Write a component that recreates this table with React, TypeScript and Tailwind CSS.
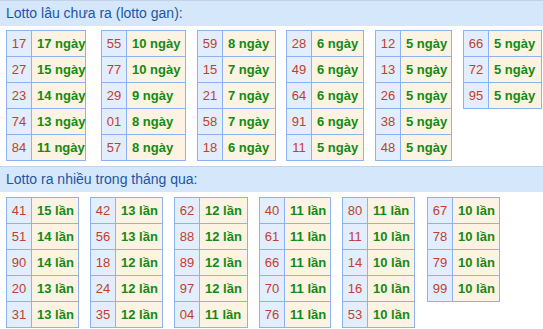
type Row = [string, string];

type Table = { rows: Row[]; className: string; valWidth: string };

const ganTables: Table[] = [
  {
    className: "ml-[6px] w-[80px]",
    valWidth: "w-[54px]",
    rows: [["17", "17"], ["27", "15"], ["23", "14"], ["74", "13"], ["84", "11"]],
  },
  {
    className: "ml-[15px] w-[85px]",
    valWidth: "w-[59px]",
    rows: [["55", "10"], ["77", "10"], ["29", "9"], ["01", "8"], ["57", "8"]],
  },
  {
    className: "ml-[11px] w-[79px]",
    valWidth: "w-[53px]",
    rows: [["59", "8"], ["15", "7"], ["21", "7"], ["58", "7"], ["18", "6"]],
  },
  {
    className: "ml-[10px] w-[78px]",
    valWidth: "w-[52px]",
    rows: [["28", "6"], ["49", "6"], ["64", "6"], ["91", "6"], ["11", "5"]],
  },
  {
    className: "ml-[11px] w-[77px]",
    valWidth: "w-[51px]",
    rows: [["12", "5"], ["13", "5"], ["26", "5"], ["38", "5"], ["48", "5"]],
  },
  {
    className: "ml-[11px] w-[79px]",
    valWidth: "w-[53px]",
    rows: [["66", "5"], ["72", "5"], ["95", "5"]],
  },
];

const hotTables: Table[] = [
  {
    className: "ml-[6px] w-[73px]",
    valWidth: "w-[47px]",
    rows: [["41", "15"], ["51", "14"], ["90", "14"], ["20", "13"], ["31", "13"]],
  },
  {
    className: "ml-[11px] w-[73px]",
    valWidth: "w-[47px]",
    rows: [["42", "13"], ["56", "13"], ["18", "12"], ["24", "12"], ["35", "12"]],
  },
  {
    className: "ml-[11px] w-[74px]",
    valWidth: "w-[48px]",
    rows: [["62", "12"], ["88", "12"], ["89", "12"], ["97", "12"], ["04", "11"]],
  },
  {
    className: "ml-[11px] w-[72px]",
    valWidth: "w-[46px]",
    rows: [["40", "11"], ["61", "11"], ["66", "11"], ["70", "11"], ["76", "11"]],
  },
  {
    className: "ml-[11px] w-[73px]",
    valWidth: "w-[47px]",
    rows: [["80", "11"], ["11", "10"], ["14", "10"], ["16", "10"], ["53", "10"]],
  },
  {
    className: "ml-[12px] w-[73px]",
    valWidth: "w-[47px]",
    rows: [["67", "10"], ["78", "10"], ["79", "10"], ["99", "10"]],
  },
];

function Heading({ children }: { children: string }) {
  return (
    <div className="flex h-[26px] items-center border-t border-[#c3d3e6] bg-[#d5e8fb] pl-[6px] text-[14px] text-[#1d55a5]">
      {children}
    </div>
  );
}

function LottoTable({ table, unit }: { table: Table; unit: string }) {
  return (
    <div className={`flex shrink-0 flex-col self-start border-l border-t border-[#8db2f2] ${table.className}`}>
      {table.rows.map(([num, count]) => (
        <div key={num} className="flex h-[26px]">
          <div className="flex w-[25px] shrink-0 items-center justify-center border-b border-r border-[#8db2f2] bg-[#e2eefd] text-[13px] text-[#c0402a]">
            {num}
          </div>
          <div
            className={`flex shrink-0 items-center whitespace-nowrap border-b border-r border-[#8db2f2] bg-[#fdf3e2] pl-[5px] text-[13px] font-bold text-[#138a13] ${table.valWidth}`}
          >
            {count} {unit}
          </div>
        </div>
      ))}
    </div>
  );
}

export default function App() {
  return (
    <div className="h-[329px] w-[543px] overflow-hidden bg-white font-['Liberation_Sans',Arial,sans-serif]">
      <Heading>Lotto lâu chưa ra (lotto gan):</Heading>
      <div className="mt-[4px] flex">
        {ganTables.map((t, i) => (
          <LottoTable key={i} table={t} unit="ngày" />
        ))}
      </div>
      <div className="mt-[5px]">
        <Heading>Lotto ra nhiều trong tháng qua:</Heading>
      </div>
      <div className="mt-[5px] flex">
        {hotTables.map((t, i) => (
          <LottoTable key={i} table={t} unit="lần" />
        ))}
      </div>
    </div>
  );
}
